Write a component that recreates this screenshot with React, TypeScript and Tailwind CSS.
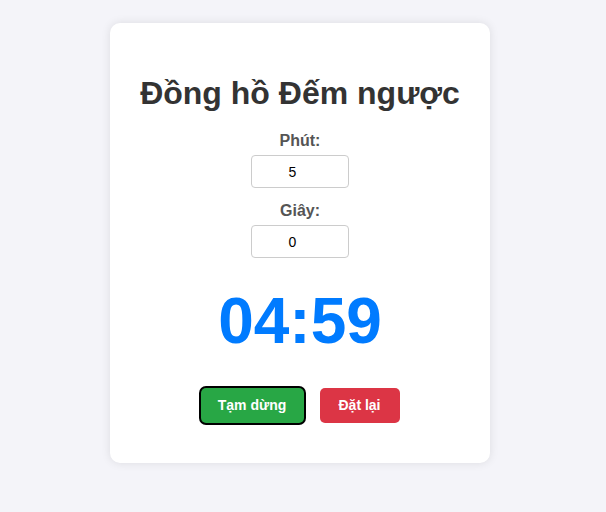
import React, { useState } from 'react';

export default function App() {
  const [minutes, setMinutes] = useState('5');
  const [seconds, setSeconds] = useState('0');

  return (
    <div className="min-h-[512px] w-full bg-[#f4f4f9] pt-[23px] font-['Liberation_Sans',Arial,sans-serif]">
      <div className="ml-[110px] flex h-[440px] w-[380px] flex-col items-center rounded-[10px] bg-white pt-[52px] shadow-[0_0_10px_rgba(0,0,0,0.1)]">
        {/* Title */}
        <h1 className="text-[32px] font-bold leading-[37px] text-[#333]">Đồng hồ Đếm ngược</h1>

        {/* Inputs */}
        <label className="mt-[20px] text-[16px] font-bold leading-[18px] text-[#555]">Phút:</label>
        <input
          value={minutes}
          onChange={(e) => setMinutes(e.target.value)}
          className="mt-[5px] h-[33px] w-[98px] rounded-[4px] border border-[#ccc] pr-[15px] text-center text-[14px] text-black outline-none"
        />
        <label className="mt-[14px] text-[16px] font-bold leading-[18px] text-[#555]">Giây:</label>
        <input
          value={seconds}
          onChange={(e) => setSeconds(e.target.value)}
          className="mt-[5px] h-[33px] w-[98px] rounded-[4px] border border-[#ccc] pr-[15px] text-center text-[14px] text-black outline-none"
        />

        {/* Timer */}
        <div className="mt-[26px] text-[64px] font-bold leading-[74px] text-[#007bff]">04:59</div>

        {/* Buttons */}
        <div className="mt-[30px] flex items-center gap-[16px]">
          <button className="h-[35px] w-[103px] rounded-[5px] bg-[#28a745] text-[14px] font-bold text-white ring-2 ring-black">
            Tạm dừng
          </button>
          <button className="h-[35px] w-[80px] rounded-[5px] bg-[#dc3545] text-[14px] font-bold text-white">
            Đặt lại
          </button>
        </div>
      </div>
    </div>
  );
}
